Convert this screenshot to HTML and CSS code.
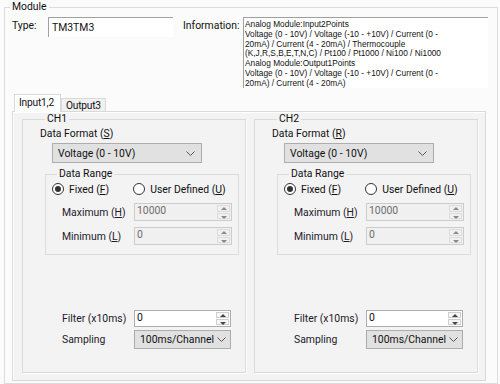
FILE: index.html
```html
<!DOCTYPE html>
<html lang="en">
  <head>
    <meta charset="utf-8">
    <title>Module</title>
    <link rel="stylesheet" href="styles.css">
  </head>
  <body>
    <fieldset class="group module">
      <legend>Module</legend>
      <div class="module-head">
        <span class="lbl type-lbl">Type:</span>
        <div class="textbox type-box">TM3TM3</div>
        <span class="lbl info-lbl">Information:</span>
        <div class="textbox info-box">
          Analog Module:Input2Points<br>
          Voltage (0 - 10V) / Voltage (-10 - +10V) / Current (0 -<br>
          20mA) / Current (4 - 20mA) / Thermocouple<br>
          (K,J,R,S,B,E,T,N,C) / Pt100 / Pt1000 / Ni100 / Ni1000<br>
          Analog Module:Output1Points<br>
          Voltage (0 - 10V) / Voltage (-10 - +10V) / Current (0 -<br>
          20mA) / Current (4 - 20mA)
        </div>
      </div>

      <div class="tabs">
        <div class="tab-strip">
          <span class="tab active">Input1,2</span>
          <span class="tab">Output3</span>
        </div>
        <div class="tab-panel">
          <!-- Channel 1 -->
          <fieldset class="group channel">
            <legend>CH1</legend>
            <div class="field-label">Data Format (<u>S</u>)</div>
            <div class="combo format">
              <span>Voltage (0 - 10V)</span>
              <svg class="chev" width="9" height="5" viewBox="0 0 9 5"><polyline points="0.5,0.5 4.5,4.5 8.5,0.5" fill="none" stroke="#555" stroke-width="1"/></svg>
            </div>
            <fieldset class="group range">
              <legend>Data Range</legend>
              <div class="radios">
                <span class="radio"><span class="dot checked"></span>Fixed (<u>F</u>)</span>
                <span class="radio user"><span class="dot"></span>User Defined (<u>U</u>)</span>
              </div>
              <div class="row">
                <span class="row-label">Maximum (<u>H</u>)</span>
                <div class="spin disabled">
                  <span class="val">10000</span>
                  <span class="arrows"><span class="up"></span><span class="down"></span></span>
                </div>
              </div>
              <div class="row min">
                <span class="row-label">Minimum (<u>L</u>)</span>
                <div class="spin disabled">
                  <span class="val">0</span>
                  <span class="arrows"><span class="up"></span><span class="down"></span></span>
                </div>
              </div>
            </fieldset>
            <div class="row filter">
              <span class="row-label">Filter (x10ms)</span>
              <div class="spin">
                <span class="val">0</span>
                <span class="arrows"><span class="up"></span><span class="down"></span></span>
              </div>
            </div>
            <div class="row sampling">
              <span class="row-label">Sampling</span>
              <div class="combo small">
                <span>100ms/Channel</span>
                <svg class="chev" width="9" height="5" viewBox="0 0 9 5"><polyline points="0.5,0.5 4.5,4.5 8.5,0.5" fill="none" stroke="#555" stroke-width="1"/></svg>
              </div>
            </div>
          </fieldset>

          <!-- Channel 2 -->
          <fieldset class="group channel">
            <legend>CH2</legend>
            <div class="field-label">Data Format (<u>R</u>)</div>
            <div class="combo format">
              <span>Voltage (0 - 10V)</span>
              <svg class="chev" width="9" height="5" viewBox="0 0 9 5"><polyline points="0.5,0.5 4.5,4.5 8.5,0.5" fill="none" stroke="#555" stroke-width="1"/></svg>
            </div>
            <fieldset class="group range">
              <legend>Data Range</legend>
              <div class="radios">
                <span class="radio"><span class="dot checked"></span>Fixed (<u>F</u>)</span>
                <span class="radio user"><span class="dot"></span>User Defined (<u>U</u>)</span>
              </div>
              <div class="row">
                <span class="row-label">Maximum (<u>H</u>)</span>
                <div class="spin disabled">
                  <span class="val">10000</span>
                  <span class="arrows"><span class="up"></span><span class="down"></span></span>
                </div>
              </div>
              <div class="row min">
                <span class="row-label">Minimum (<u>L</u>)</span>
                <div class="spin disabled">
                  <span class="val">0</span>
                  <span class="arrows"><span class="up"></span><span class="down"></span></span>
                </div>
              </div>
            </fieldset>
            <div class="row filter">
              <span class="row-label">Filter (x10ms)</span>
              <div class="spin">
                <span class="val">0</span>
                <span class="arrows"><span class="up"></span><span class="down"></span></span>
              </div>
            </div>
            <div class="row sampling">
              <span class="row-label">Sampling</span>
              <div class="combo small">
                <span>100ms/Channel</span>
                <svg class="chev" width="9" height="5" viewBox="0 0 9 5"><polyline points="0.5,0.5 4.5,4.5 8.5,0.5" fill="none" stroke="#555" stroke-width="1"/></svg>
              </div>
            </div>
          </fieldset>
        </div>
      </div>
    </fieldset>
  </body>
</html>
```

FILE: styles.css
```css
body {
  margin: 0;
  height: 384px;
  overflow: hidden;
  background-color: #fbfbfb;
  color: #111;
  font-family: Roboto, 'Liberation Sans', sans-serif;
  font-size: 10.4px;
}

u {
  text-decoration-thickness: 1px;
  text-underline-offset: 1px;
}

.group {
  border: 1px solid #dcdcdc;
  margin: 0;
  padding: 0;
  min-width: 0;
}

.group > legend {
  margin-left: 5px;
  padding: 0 2px;
  height: 14px;
  line-height: 14px;
}

.module {
  margin: 0 2px 0 4px;
  padding-bottom: 2px;
}

.module-head {
  display: flex;
  align-items: flex-start;
  margin-top: 3px;
  padding-left: 7px;
}

.lbl {
  line-height: 14px;
  margin-top: 2px;
}

.type-lbl {
  width: 36px;
}

.textbox {
  box-sizing: border-box;
  background-color: #fff;
  border-top: 1px solid #a0a0a0;
  border-left: 1px solid #a0a0a0;
}

.type-box {
  width: 125px;
  height: 20px;
  padding: 3px 0 0 3px;
  line-height: 14px;
}

.info-lbl {
  margin-left: 10px;
  width: 60px;
}

.info-box {
  width: 245px;
  height: 71px;
  padding: 2px 0 0 1px;
  font-family: 'Liberation Sans', sans-serif;
  font-size: 8.3px;
  line-height: 9.8px;
  white-space: nowrap;
  overflow: hidden;
}

.tabs {
  margin: 6px 11px 0 7px;
}

.tab-strip {
  display: flex;
  align-items: flex-end;
  height: 17px;
  padding-left: 2px;
}

.tab {
  position: relative;
  box-sizing: border-box;
  height: 13px;
  padding: 0 4px;
  border: 1px solid #d9d9d9;
  border-bottom: none;
  background-color: #f0f0f0;
  font-size: 10.2px;
  line-height: 13px;
  letter-spacing: -0.2px;
}

.tab.active {
  z-index: 1;
  height: 18px;
  margin-bottom: -1px;
  padding: 0 6px 0 4px;
  line-height: 16px;
  background-color: #fff;
}

.tab-panel {
  display: flex;
  gap: 8px;
  height: 270px;
  box-sizing: border-box;
  padding: 0 7px 7px 9px;
  border: 1px solid #d9d9d9;
  background-color: #f3f3f3;
  box-shadow: inset 1px 1px 0 #fff;
}

.channel {
  flex: 1;
  padding: 0 0 0 17px;
  border-color: #dadada;
  box-shadow: 1px 1px 0 #fff;
}

.field-label {
  margin-top: 1px;
  height: 16px;
  line-height: 14px;
}

.combo {
  display: flex;
  align-items: center;
  justify-content: space-between;
  box-sizing: border-box;
  border: 1px solid #adadad;
  background-color: #e1e1e1;
  padding: 0 6px 0 5px;
}

.format {
  width: 150px;
  height: 20px;
  margin-left: 12px;
}

.combo.small {
  width: 97px;
  height: 19px;
  padding: 0 4px 0 5px;
}

.range {
  width: 194px;
  box-sizing: border-box;
  margin: 4px 0 0 5px;
  padding: 0 0 9px 6px;
}

.radios {
  display: flex;
  align-items: center;
  margin-top: 1px;
  height: 14px;
}

.radio {
  display: flex;
  align-items: center;
}

.radio.user {
  margin-left: 24px;
}

.dot {
  box-sizing: border-box;
  width: 12px;
  height: 12px;
  margin-right: 5px;
  border: 1px solid #333;
  border-radius: 50%;
  background-color: #fff;
  position: relative;
}

.dot.checked::after {
  content: '';
  position: absolute;
  left: 2px;
  top: 2px;
  width: 6px;
  height: 6px;
  border-radius: 50%;
  background-color: #333;
}

.row {
  display: flex;
  align-items: center;
  margin-top: 7px;
}

.row.min {
  margin-top: 6px;
}

.row-label {
  width: 72px;
  color: #221a2a;
}

.range .row-label {
  margin-left: 10px;
}

.channel > .row .row-label {
  margin-left: 22px;
}

.row.filter {
  margin-top: 55px;
}

.row.sampling {
  margin-top: 3px;
}

.spin {
  display: flex;
  box-sizing: border-box;
  width: 98px;
  height: 18px;
  border: 1px solid #abadb3;
  background-color: #fff;
}

.spin.disabled {
  border-color: #cccccc;
  background-color: #f0f0f0;
  color: #6d6d6d;
}

.channel > .row .spin {
  width: 97px;
  height: 17px;
}

.val {
  flex: 1;
  padding-left: 2px;
  line-height: 14px;
}

.arrows {
  display: flex;
  flex-direction: column;
  width: 13px;
  margin: 1px 1px 1px 0;
  gap: 1px;
}

.arrows span {
  flex: 1;
  position: relative;
  border: 1px solid #cfcfcf;
  background-color: #f6f6f6;
}

.spin.disabled .arrows span {
  border-color: #dcdcdc;
  background-color: #f0f0f0;
}

.arrows span::after {
  content: '';
  position: absolute;
  left: 3px;
  border-left: 3px solid transparent;
  border-right: 3px solid transparent;
}

.arrows .up::after {
  top: 1px;
  border-bottom: 3px solid #444;
}

.arrows .down::after {
  top: 2px;
  border-top: 3px solid #444;
}

.spin.disabled .arrows .up::after {
  border-bottom-color: #888;
}

.spin.disabled .arrows .down::after {
  border-top-color: #888;
}
```
